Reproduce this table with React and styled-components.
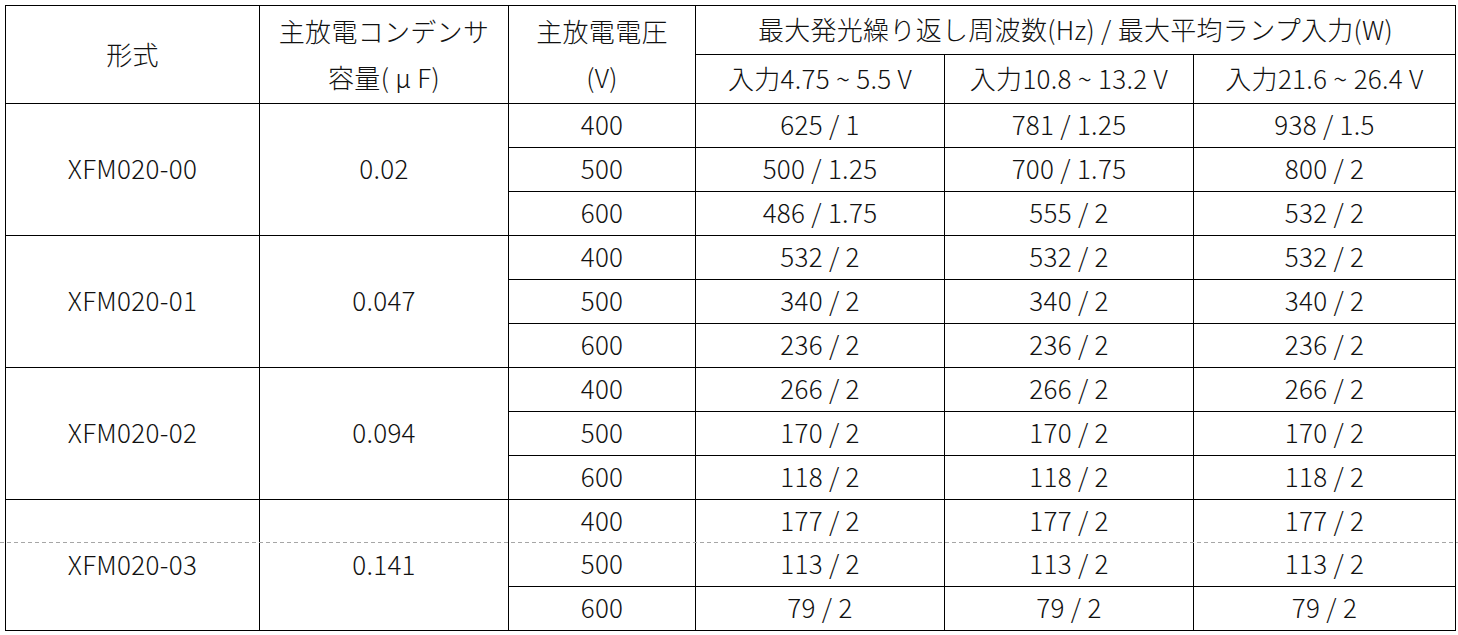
import React from 'react';
import styled, { createGlobalStyle } from 'styled-components';

const GlobalStyle = createGlobalStyle`
  html, body {
    margin: 0;
    padding: 0;
    background: #fff;
  }
  body {
    font-family: "Noto Sans CJK JP", "Noto Sans", sans-serif;
    color: #111;
  }
`;

const Page = styled.div`
  position: relative;
  width: 1458px;
  height: 635px;
  padding: 5px 0 0 5px;
  box-sizing: border-box;
  overflow: hidden;
`;

const Table = styled.table`
  border-collapse: collapse;
  table-layout: fixed;
  width: 1451px;
  font-size: 26px;
  font-weight: 300;
  line-height: 1.2;
  letter-spacing: 0.3px;
`;

const HeadCell = styled.th`
  border: 1px solid #000;
  font-weight: 300;
  padding: 0 0 2px;
  text-align: center;
  vertical-align: middle;
  line-height: 46px;
  height: ${({ h }) => h}px;
`;

const Cell = styled.td`
  border: 1px solid #000;
  padding: 0 0 3px;
  text-align: center;
  vertical-align: middle;
  height: 40px;
  ${({ $break }) => $break && 'border-top: hidden;'}
`;

const PageBreak = styled.div`
  position: absolute;
  left: 0;
  right: 0;
  top: 542px;
  height: 1px;
  background: repeating-linear-gradient(
    to right,
    #a6a6a6 0 4px,
    transparent 4px 7px
  );
  pointer-events: none;
`;

const groups = [
  {
    model: 'XFM020-00',
    cap: '0.02',
    rows: [
      ['400', '625 / 1', '781 / 1.25', '938 / 1.5'],
      ['500', '500 / 1.25', '700 / 1.75', '800 / 2'],
      ['600', '486 / 1.75', '555 / 2', '532 / 2'],
    ],
  },
  {
    model: 'XFM020-01',
    cap: '0.047',
    rows: [
      ['400', '532 / 2', '532 / 2', '532 / 2'],
      ['500', '340 / 2', '340 / 2', '340 / 2'],
      ['600', '236 / 2', '236 / 2', '236 / 2'],
    ],
  },
  {
    model: 'XFM020-02',
    cap: '0.094',
    rows: [
      ['400', '266 / 2', '266 / 2', '266 / 2'],
      ['500', '170 / 2', '170 / 2', '170 / 2'],
      ['600', '118 / 2', '118 / 2', '118 / 2'],
    ],
  },
  {
    model: 'XFM020-03',
    cap: '0.141',
    breakAt: 1,
    rows: [
      ['400', '177 / 2', '177 / 2', '177 / 2'],
      ['500', '113 / 2', '113 / 2', '113 / 2'],
      ['600', '79 / 2', '79 / 2', '79 / 2'],
    ],
  },
];

export default function App() {
  return (
    <Page>
      <GlobalStyle />
      <Table>
        <colgroup>
          <col style={{ width: 254 }} />
          <col style={{ width: 249 }} />
          <col style={{ width: 187 }} />
          <col style={{ width: 249 }} />
          <col style={{ width: 249 }} />
          <col style={{ width: 262 }} />
        </colgroup>
        <thead>
          <tr>
            <HeadCell rowSpan={2}>形式</HeadCell>
            <HeadCell rowSpan={2}>主放電コンデンサ<br />容量( μ F)</HeadCell>
            <HeadCell rowSpan={2}>主放電電圧<br />(V)</HeadCell>
            <HeadCell colSpan={3} h={45}>最大発光繰り返し周波数(Hz) / 最大平均ランプ入力(W)</HeadCell>
          </tr>
          <tr>
            <HeadCell h={46}>入力4.75 ~ 5.5 V</HeadCell>
            <HeadCell h={46}>入力10.8 ~ 13.2 V</HeadCell>
            <HeadCell h={46}>入力21.6 ~ 26.4 V</HeadCell>
          </tr>
        </thead>
        <tbody>
          {groups.map((g) =>
            g.rows.map((r, i) => (
              <tr key={g.model + r[0]}>
                {i === 0 && (
                  <>
                    <Cell rowSpan={3}>{g.model}</Cell>
                    <Cell rowSpan={3}>{g.cap}</Cell>
                  </>
                )}
                {r.map((v, j) => (
                  <Cell key={j} $break={g.breakAt === i}>{v}</Cell>
                ))}
              </tr>
            ))
          )}
        </tbody>
      </Table>
      <PageBreak />
    </Page>
  );
}
